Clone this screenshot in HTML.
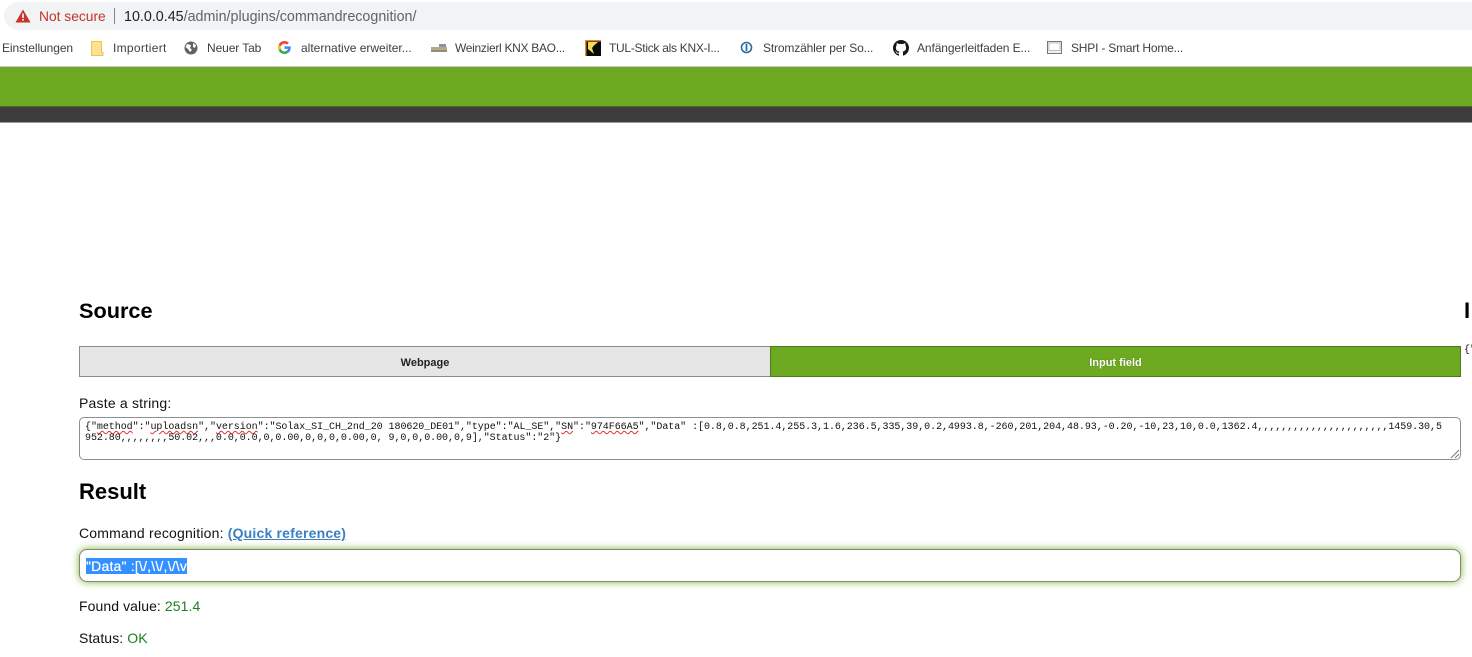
<!DOCTYPE html>
<html>
<head>
<meta charset="utf-8">
<style>
html,body{margin:0;padding:0;background:#fff;width:1472px;height:657px;overflow:hidden}
body{position:relative;font-family:"Liberation Sans",sans-serif;color:#111}
.a{position:absolute;white-space:pre}
.bm{position:absolute;top:41px;font-size:12px;line-height:14px;color:#3c4043;white-space:pre}
.ic{position:absolute}
.m{font-family:"Liberation Mono",monospace;font-size:10px;letter-spacing:-.05px;line-height:11px;color:#111}
.w{text-decoration:underline wavy #e03030 1px;text-underline-offset:1px}
</style>
</head>
<body>
<!-- address bar -->
<div class="a" style="left:4px;top:2px;width:1468px;height:28px;background:#f1f3f4;border-radius:14px 0 0 14px"></div>
<svg class="ic" style="left:15px;top:9px" width="16" height="14" viewBox="0 0 16 14"><path d="M8 0.5L15.5 13.5H0.5Z" fill="#c5332a"/><rect x="7.2" y="4.5" width="1.6" height="4.5" fill="#fff"/><rect x="7.2" y="10" width="1.6" height="1.6" fill="#fff"/></svg>
<div class="a" style="left:39px;top:9px;font-size:13.8px;line-height:15px;color:#c5332a">Not secure</div>
<div class="a" style="left:114px;top:8px;width:1px;height:16px;background:#80868b"></div>
<div class="a" style="left:124px;top:9px;font-size:14.3px;line-height:16px;color:#5f6368"><span style="color:#202124">10.0.0.45</span>/admin/plugins/commandrecognition/</div>

<!-- bookmarks -->
<div class="bm" style="left:2px;letter-spacing:-.08px">Einstellungen</div>
<svg class="ic" style="left:90px;top:41px" width="14" height="15" viewBox="0 0 14 15"><path d="M1.500 0.500H11.500V11.500H13V14.500H1.500Z" fill="#fde293" stroke="#f0c24e"/></svg>
<div class="bm" style="left:113px;letter-spacing:.3px">Importiert</div>
<svg class="ic" style="left:184px;top:41px" width="14" height="14" viewBox="0 0 14 14"><circle cx="7" cy="7" r="6.5" fill="#5f6368"/><path d="M3 3L7 4L6 7L8 9L6 11L4 8L1.5 6ZM9 2L12 4L11 7L9 6Z" fill="#fff"/></svg>
<div class="bm" style="left:207px;letter-spacing:-.1px">Neuer Tab</div>
<svg class="ic" style="left:278px;top:41px" width="13" height="13" viewBox="0 0 24 24"><path d="M23.5 12.3c0-.8-.1-1.600-.2-2.300H12v4.500h6.500a5.500 5.500 0 0 1-2.400 3.600v3h3.900c2.300-2.100 3.500-5.200 3.500-8.800z" fill="#4285f4"/><path d="M12 24c3.200 0 6-1.100 8-2.900l-3.900-3c-1.100.7-2.500 1.200-4.100 1.200-3.100 0-5.800-2.100-6.700-5H1.300v3.100A12 12 0 0 0 12 24z" fill="#34a853"/><path d="M5.300 14.300a7.200 7.200 0 0 1 0-4.600V6.600H1.300a12 12 0 0 0 0 10.800z" fill="#fbbc05"/><path d="M12 4.800c1.800 0 3.300.6 4.600 1.800l3.400-3.400A12 12 0 0 0 1.300 6.600l4 3.100c.9-2.800 3.600-4.900 6.700-4.900z" fill="#ea4335"/></svg>
<div class="bm" style="left:301px">alternative erweiter...</div>
<svg class="ic" style="left:431px;top:44px" width="16" height="9" viewBox="0 0 16 9"><rect x="8" y="0" width="7" height="3" fill="#7f95a8"/><rect x="0" y="3" width="16" height="3" fill="#b5a98a"/><rect x="0" y="6" width="16" height="2" fill="#8d8f7a"/></svg>
<div class="bm" style="left:455px;letter-spacing:-.3px">Weinzierl KNX BAO...</div>
<svg class="ic" style="left:585px;top:40px" width="16" height="16" viewBox="0 0 16 16"><rect width="16" height="16" fill="#0a0a0a"/><path d="M0 0H16V1.500H1.500V16H0Z" fill="#e08a30"/><path d="M3 2H13L9 5.500L7 8L9 14L5.500 11L3 9Z" fill="#f6dc55"/></svg>
<div class="bm" style="left:609px;letter-spacing:-.28px">TUL-Stick als KNX-I...</div>
<svg class="ic" style="left:740px;top:41px" width="13" height="13" viewBox="0 0 13 13"><circle cx="6.500" cy="6.500" r="5" fill="#fff" stroke="#2b6ca3" stroke-width="1.600"/><rect x="5.600" y="3" width="1.800" height="7" fill="#2b6ca3"/></svg>
<div class="bm" style="left:763px;letter-spacing:-.15px">Stromzähler per So...</div>
<svg class="ic" style="left:893px;top:40px" width="16" height="16" viewBox="0 0 16 16"><path fill="#161614" d="M8 0C3.580 0 0 3.580 0 8c0 3.540 2.290 6.530 5.470 7.590.4.070.55-.17.55-.38 0-.19-.01-.82-.01-1.490-2.010.37-2.530-.49-2.690-.94-.09-.23-.48-.94-.82-1.130-.28-.15-.68-.52-.01-.53.630-.01 1.080.58 1.230.82.720 1.210 1.870.87 2.330.66.070-.52.280-.87.510-1.070-1.780-.2-3.640-.89-3.640-3.950 0-.87.310-1.590.82-2.150-.08-.2-.36-1.020.08-2.120 0 0 .67-.21 2.200.82.640-.18 1.320-.27 2-.27s1.360.09 2 .27c1.530-1.040 2.200-.82 2.200-.82.440 1.100.16 1.920.08 2.120.51.560.82 1.270.82 2.150 0 3.070-1.870 3.750-3.650 3.950.29.250.54.730.54 1.480 0 1.070-.01 1.930-.01 2.200 0 .21.150.46.550.38A8.010 8.010 0 0 0 16 8c0-4.420-3.580-8-8-8z"/></svg>
<div class="bm" style="left:917px;letter-spacing:-.1px">Anfängerleitfaden E...</div>
<svg class="ic" style="left:1047px;top:41px" width="15" height="13" viewBox="0 0 15 13"><rect x="0.500" y="0.500" width="14" height="12" fill="#f1f1f1" stroke="#777"/><rect x="2" y="2" width="11" height="7.500" fill="#fff" stroke="#999" stroke-width=".6"/></svg>
<div class="bm" style="left:1071px;letter-spacing:-.2px">SHPI - Smart Home...</div>
<div class="a" style="left:0;top:66px;width:1472px;height:1px;background:#c9c9c9"></div>

<!-- page header -->
<div class="a" style="left:0;top:67px;width:1472px;height:39px;background:#6eaa21"></div>
<div class="a" style="left:0;top:106px;width:1472px;height:16px;background:#3c3c3c;border-top:1px solid #4f6b2a;box-sizing:border-box"></div>
<div class="a" style="left:0;top:122px;width:1472px;height:1px;background:#999"></div>

<!-- Source -->
<div class="a" style="left:79px;top:298px;font-size:21.7px;line-height:26px;font-weight:bold;color:#000">Source</div>
<div class="a" style="left:1464px;top:298px;font-size:22px;line-height:26px;font-weight:bold;color:#000">I</div>
<div class="a m" style="left:1464px;top:345px">{"</div>

<div class="a" style="left:79px;top:346px;width:692px;height:31px;box-sizing:border-box;background:#e6e6e6;border:1px solid #8c8c8c;text-align:center;font-size:11px;line-height:32px;font-weight:bold;color:#222">Webpage</div>
<div class="a" style="left:770px;top:346px;width:691px;height:31px;box-sizing:border-box;background:#6eaa21;border:1px solid #4f7a1c;text-align:center;font-size:11px;line-height:32px;font-weight:bold;color:#fff;text-shadow:0 0 1px #40600f">Input field</div>

<div class="a" style="left:79px;top:395px;font-size:14px;line-height:16px;color:#111;letter-spacing:.2px">Paste a string:</div>
<div class="a" style="left:79px;top:417px;width:1382px;height:43px;box-sizing:border-box;border:1px solid #8f8f8f;border-radius:5px;background:#fff"></div>
<div class="a m" style="left:85px;top:422px;line-height:12px">{"<span class="w">method</span>":"<span class="w">uploadsn</span>","<span class="w">version</span>":"Solax_SI_CH_2nd_20 180620_DE01","type":"AL_SE","<span class="w">SN</span>":"<span class="w">974F66A5</span>","Data" :[0.8,0.8,251.4,255.3,1.6,236.5,335,39,0.2,4993.8,-260,201,204,48.93,-0.20,-10,23,10,0.0,1362.4,,,,,,,,,,,,,,,,,,,,,,1459.30,5</div>
<div class="a m" style="left:85px;top:433px;line-height:12px">952.80,,,,,,,,50.02,,,0.0,0.0,0,0.00,0,0,0,0.00,0, 9,0,0,0.00,0,9],"Status":"2"}</div>
<svg class="ic" style="left:1450px;top:449px" width="10" height="10" viewBox="0 0 10 10"><path d="M1 9L9 1M5 9L9 5" stroke="#777" stroke-width="1" fill="none"/></svg>

<!-- Result -->
<div class="a" style="left:79px;top:479px;font-size:22px;line-height:26px;font-weight:bold;color:#000">Result</div>
<div class="a" style="left:79px;top:525px;font-size:14px;line-height:16px;color:#111;letter-spacing:.19px">Command recognition: <b style="color:#3b7fc4;text-decoration:underline">(Quick reference)</b></div>
<div class="a" style="left:79px;top:549px;width:1382px;height:33px;box-sizing:border-box;border:1px solid #7d8a70;border-radius:8px;background:#fff;box-shadow:0 0 8px #7fb23a"></div>
<div class="a" style="left:86px;top:558px;height:16px;background:#3390ff;color:#fff;font-size:14px;line-height:16px;letter-spacing:.2px;text-shadow:0 0 .6px #fff">"Data" :[\/,\\/,\/\v</div>
<div class="a" style="left:79px;top:598px;font-size:14px;line-height:16px;color:#111;letter-spacing:.08px">Found value: <span style="color:#1a8020">251.4</span></div>
<div class="a" style="left:79px;top:630px;font-size:14px;line-height:16px;color:#111;letter-spacing:.1px">Status: <span style="color:#1a8020">OK</span></div>
</body>
</html>
